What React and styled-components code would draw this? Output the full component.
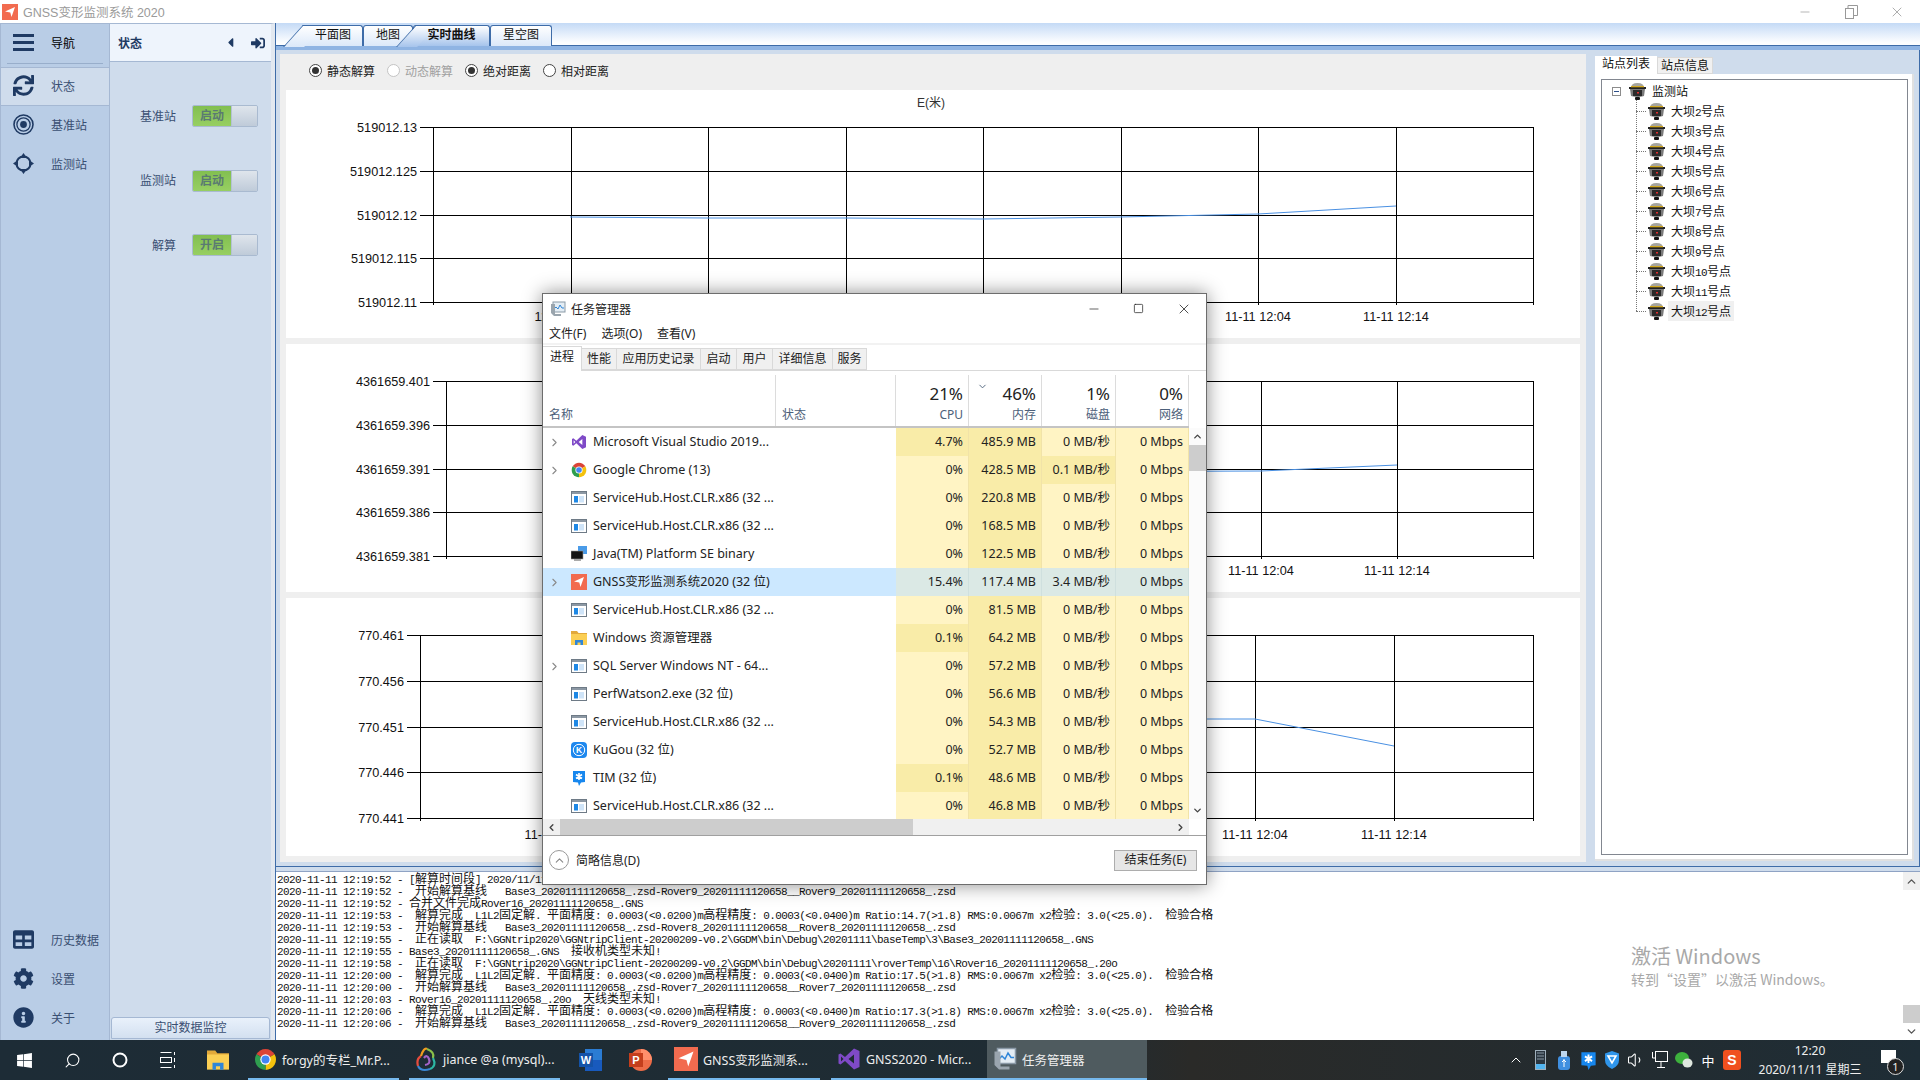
import styled, { createGlobalStyle } from "styled-components"
import { FaSync, FaTable, FaCog, FaInfoCircle, FaSignInAlt, FaCaretLeft, FaWindows } from "react-icons/fa"
import { ChevronRight, ChevronUp, ChevronDown, ChevronLeft, Search, Volume1, Minus, Square, X } from "lucide-react"

const Global = createGlobalStyle`
html,body{margin:0;padding:0;overflow:hidden;background:#fff;}
*{box-sizing:border-box;}
body{font-family:"Liberation Sans","Noto Sans CJK SC",sans-serif;font-size:12px;}
`

const navy = "#1f3a63"
const border = "#a5b8d3"

// icons
const GnssLogo = ({ size = 16 }) => (
  <svg width={size} height={size} viewBox="0 0 16 16"><rect width="16" height="16" fill="#f26b4f" /><path d="M3 7.5 13 3 9.5 13 8.3 8.6Z" fill="#fff" /></svg>
)
const Bars = () => (
  <svg width="21" height="17" viewBox="0 0 21 17"><path d="M0 0h21v3H0zM0 7h21v3H0zM0 14h21v3H0z" fill={navy} /></svg>
)
const Bullseye = () => (
  <svg width="21" height="21" viewBox="0 0 21 21" fill="none" stroke={navy}><circle cx="10.5" cy="10.5" r="9.5" strokeWidth="1.6" /><circle cx="10.5" cy="10.5" r="6.6" strokeWidth="1.3" /><circle cx="10.5" cy="10.5" r="3.4" fill={navy} stroke="none" /></svg>
)
const Crosshair = () => (
  <svg width="21" height="21" viewBox="0 0 21 21" fill={navy}><circle cx="10.5" cy="10.5" r="7" fill="none" stroke={navy} strokeWidth="2" /><path d="M10.5 0 14 5H7zM10.5 21 7 16h7zM0 10.5 5 7v7zM21 10.5 16 14V7z" /></svg>
)
const Restore = () => (
  <svg width="13" height="14" viewBox="0 0 13 14" fill="none" stroke="#999"><rect x=".5" y="3.500" width="8" height="10" /><path d="M3 3.500V.5h9.500v10H8.500" /></svg>
)
const Receiver = () => (
  <svg width="19" height="19" viewBox="0 0 19 19"><path d="M3 6Q3 1 9.500 1T16 6Z" fill="#a5a59f" /><rect x="1" y="5" width="17" height="2" fill="#222" /><rect x="3" y="4" width="13" height="1.300" fill="#d2a820" /><path d="M2 7h15l-1 7q-6 2-13 0Z" fill="#7a7a7a" /><rect x="5" y="8" width="9" height="6" fill="#2a2a2a" /><rect x="9" y="10" width="2" height="1.500" fill="#e03030" /><rect x="7" y="15" width="5" height="3" rx="1" fill="#151515" /></svg>
)
const ServiceIcon = () => (
  <svg width="16" height="16" viewBox="0 0 16 16"><rect x=".5" y="1.500" width="15" height="13" fill="#fff" stroke="#6e7a86" /><rect x="1" y="2" width="14" height="2" fill="#8c98a4" /><rect x="3" y="6" width="4" height="6.500" fill="#1e88e5" /><rect x="8" y="6" width="5" height="6.500" fill="#cfe4f8" /></svg>
)
const VsIcon = ({ size = 16 }) => (
  <svg width={size} height={size} viewBox="0 0 24 24"><path fillRule="evenodd" d="M17 1.500 22.500 4v16L17 22.500 8 14l-4.500 3.500L1.500 16.500v-9L3.500 6.500 8 10ZM17 7.500 11.500 12l5.500 4.500ZM4 9.500v5L6.500 12Z" fill="#7f4ac7" /></svg>
)
const ChromeIcon = ({ size = 16 }) => (
  <svg width={size} height={size} viewBox="0 0 24 24"><path d="M12 12 2.500 6.500A11 11 0 0 1 21.500 6.500Z" fill="#db4437" /><path d="M12 12 21.500 6.500A11 11 0 0 1 12 23Z" fill="#f4c20d" /><path d="M12 12 12 23A11 11 0 0 1 2.500 6.500Z" fill="#2f9e4f" /><circle cx="12" cy="12" r="5.400" fill="#fff" /><circle cx="12" cy="12" r="4.200" fill="#4285f4" /></svg>
)
const JavaIcon = () => (
  <svg width="16" height="16" viewBox="0 0 16 16"><rect x="7" y="0" width="9" height="8" fill="#4a9be8" /><rect x="0" y="5" width="12" height="8" fill="#151515" stroke="#999" strokeWidth=".6" /><rect x="3" y="13" width="7" height="2" fill="#aaa" /></svg>
)
const FolderIcon = ({ size = 16 }) => (
  <svg width={size} height={size} viewBox="0 0 16 16"><path d="M0 1h6l1.500 2H16v3H0Z" fill="#e2a93a" /><rect y="4" width="16" height="11" fill="#fbcf54" /><path d="M4 15v-5h8v5h-2.500v-2.500h-3V15Z" fill="#2f86d8" /></svg>
)
const KugouIcon = () => (
  <svg width="16" height="16" viewBox="0 0 16 16"><rect width="16" height="16" rx="4" fill="#1e88ee" /><circle cx="8" cy="8" r="5.700" fill="none" stroke="#fff" /><text x="8" y="11" fontSize="8.500" fontWeight="700" fontFamily="Liberation Sans" textAnchor="middle" fill="#fff">K</text></svg>
)
const TimIcon = ({ size = 16 }) => (
  <svg width={size} height={size} viewBox="0 0 16 16"><path d="M2 1h12v11l-4 .5L8 16l-1-3.500-5-.5Z" fill="#1787ee" /><path d="M8 3v7M5 4.500l6 4M11 4.500l-6 4" stroke="#fff" strokeWidth="1.600" /></svg>
)
const TmIcon = ({ size = 16 }) => (
  <svg width={size} height={size} viewBox="0 0 16 16"><rect x="3" y="1" width="12" height="10" fill="#e4edf4" stroke="#8a99a6" /><path d="M4 8l2-2 2 2 2-4 2 3h2" fill="none" stroke="#2f86d8" /><path d="M1 3v9l3 3h7v-2H5V3Z" fill="#9aa5ae" /></svg>
)
const NavicatIcon = () => (
  <svg width="23" height="26" viewBox="0 0 23 26" fill="none" strokeWidth="2.200"><path d="M6 10Q1 13 3 20" stroke="#e84c3d" /><path d="M6 10Q9 1 12 3" stroke="#f29c1f" /><path d="M12 3Q20 6 18 12" stroke="#8cc24a" /><path d="M18 12Q22 20 15 23" stroke="#2db6a3" /><path d="M15 23Q6 26 3 20" stroke="#3b87d4" /><path d="M9 12Q12 8 14 13T10 19" stroke="#a463c9" /></svg>
)
const WordIcon = () => (
  <svg width="23" height="24" viewBox="0 0 23 24"><rect x="6" y="1" width="17" height="22" fill="#2b7cd3" /><rect x="6" y="12" width="17" height="11" fill="#185abd" /><rect y="5" width="14" height="14" fill="#1453a8" /><text x="7" y="16" fontSize="11" fontWeight="700" fontFamily="Liberation Sans" textAnchor="middle" fill="#fff">W</text></svg>
)
const PptIcon = () => (
  <svg width="23" height="24" viewBox="0 0 23 24"><circle cx="12" cy="12" r="11" fill="#ed6c47" /><path d="M12 1a11 11 0 0 1 11 11H12Z" fill="#ff8f6b" /><rect y="5" width="14" height="14" fill="#c43e1c" /><text x="7" y="16" fontSize="11" fontWeight="700" fontFamily="Liberation Sans" textAnchor="middle" fill="#fff">P</text></svg>
)
const TaskView = () => (
  <svg width="16" height="18" viewBox="0 0 16 18" fill="none" stroke="#fff"><rect x=".5" y="6.500" width="11" height="5" /><path d="M.5 1.500h11M.5 16.500h11M14.500 1v3M14.500 7v4M14.500 14v3" /></svg>
)
const TrayBar = () => (
  <svg width="11" height="20" viewBox="0 0 11 20"><rect x=".5" y=".5" width="10" height="19" fill="#2a3640" stroke="#9fb0bc" /><rect x="1" y="14" width="9" height="5" fill="#52b5f0" /><path d="M2 3h7M2 6h7M2 9h7" stroke="#8797a3" /></svg>
)
const TrayUsb = () => (
  <svg width="14" height="20" viewBox="0 0 14 20"><rect x="1" y="6" width="12" height="14" rx="3" fill="#3f8fe0" /><rect x="4" y="1" width="6" height="6" fill="#bcd6ee" /><path d="M7 9v8M5 12l2-2 2 2" stroke="#fff" fill="none" /></svg>
)
const TrayShield = () => (
  <svg width="16" height="20" viewBox="0 0 16 20"><path d="M8 1 15 3.500V10q0 6-7 9-7-3-7-9V3.500Z" fill="#2f95ea" /><path d="M4 6h8L8 13Z" fill="none" stroke="#fff" strokeWidth="1.600" /></svg>
)
const TrayNet = () => (
  <svg width="16" height="20" viewBox="0 0 16 20" fill="none" stroke="#fff"><rect x="3.500" y="1.500" width="12" height="10" /><path d="M9 12v5M5 17.500h8M.5 2v6h3" /></svg>
)
const TrayWechat = () => (
  <svg width="18" height="18" viewBox="0 0 18 18"><ellipse cx="7" cy="7" rx="7" ry="6" fill="#3db13d" /><ellipse cx="12.500" cy="12" rx="5" ry="4.500" fill="#dfe7df" /></svg>
)
const TraySogou = () => (
  <svg width="18" height="20" viewBox="0 0 18 20"><rect width="18" height="20" rx="3" fill="#f0501e" /><text x="9" y="15" fontSize="14" fontWeight="700" fontFamily="Liberation Sans" textAnchor="middle" fill="#fff">S</text></svg>
)

// splits han text from latin so each gets its own metric
const Han = styled.span`
font-family:"Noto Sans CJK SC",sans-serif;
font-size:12px;
letter-spacing:0;
`
const Mixed = ({ text }) => text.split(/([\u4e00-\u9fff]+)/).map((part, i) =>
  /[\u4e00-\u9fff]/.test(part) ? <Han key={i}>{part}</Han> : part
)

// top title bar
const TitleBar = styled.div`
height:23px;
display:flex;
align-items:center;
padding-left:2px;
background:#fff;
`
const AppTitle = styled.div`
margin-left:5px;
color:#9a9a9a;
font-size:12.5px;
flex:1;
`
const WinBtn = styled.div`
width:46px;
display:flex;
justify-content:center;
color:#999;
`

const Main = styled.div`
height:1017px;
display:flex;
`

// left nav
const Nav = styled.div`
width:110px;
background:#b9cde6;
border-left:1px solid ${border};
border-right:1px solid ${border};
border-top:1px solid ${border};
display:flex;
flex-direction:column;
`
const NavHead = styled.div`
height:44px;
position:relative;
display:flex;
align-items:center;
padding-bottom:7px;
border-bottom:1px solid ${border};
&::after{
  content:"";
  position:absolute;
  left:6px;
  right:6px;
  bottom:3px;
  border-top:1px solid #98aecb;
}
`
const NavRow = styled.div`
height:${p => p.$h || 39}px;
display:flex;
align-items:center;
padding-bottom:2px;
color:#3a4f72;
background:${p => p.$active ? "#cfdcec" : "transparent"};
border-bottom:${p => p.$active ? `1px solid ${border}` : "none"};
`
const NavIcon = styled.div`
width:50px;
display:flex;
justify-content:center;
color:${navy};
font-size:21px;
line-height:0;
padding-right:5px;
`
const NavLabel = styled.span`
font-size:12px;
`
const NavBottom = styled.div`
margin-top:auto;
margin-bottom:2px;
`

// state panel
const StatePanel = styled.div`
width:165px;
background:#cfdcec;
border-right:4px solid #e2e8f0;
border-top:1px solid ${border};
display:flex;
flex-direction:column;
`
const StateHead = styled.div`
height:38px;
background:#eef4fc;
border-bottom:1px solid ${border};
display:flex;
align-items:center;
padding-left:8px;
color:${navy};
font-weight:700;
font-size:12px;
`
const StateTitle = styled.span`
flex:1;
`
const HeadIcon = styled.span`
display:flex;
color:${navy};
font-size:${p => p.$size}px;
margin-right:${p => p.$mr}px;
`
const SwitchList = styled.div`
display:flex;
flex-direction:column;
gap:42.500px;
padding-top:43px;
`
const SwitchRow = styled.div`
display:flex;
align-items:center;
height:22px;
`
const SwitchLabel = styled.div`
width:66px;
text-align:right;
margin-right:16px;
margin-top:-2px;
color:#3a4f72;
`
const Switch = styled.div`
width:66px;
height:22px;
display:flex;
border:1px solid #a9bad0;
border-radius:2px;
overflow:hidden;
`
const SwitchOn = styled.div`
width:38px;
background:linear-gradient(#82bf50,#97cf62);
color:#5a7a72;
font-weight:700;
text-align:center;
line-height:20px;
`
const SwitchKnob = styled.div`
flex:1;
background:linear-gradient(#dfe5ec,#bfcbd9);
border-left:1px solid #b4c2d4;
`
const MonitorBtn = styled.div`
margin:auto 1px 1px;
height:22px;
background:linear-gradient(#e9f1fb,#d3e0f0);
border:1px solid ${border};
border-radius:3px 3px 0 0;
text-align:center;
line-height:20px;
color:#3a4f72;
`

// workspace
const Workspace = styled.div`
flex:1;
min-width:0;
display:flex;
flex-direction:column;
border-left:1px solid #3e6ca8;
background:#cfdcec;
`
const TabBar = styled.div`
height:27px;
flex:none;
background:linear-gradient(#c4daf6,#fdfeff 85%);
border-bottom:4px solid #8fb4e3;
box-shadow:inset 0 -1px 0 #3e6ca8;
display:flex;
padding:2px 0 0 27px;
position:relative;
`
const Tab = styled.div`
width:${p => p.$w}px;
height:21px;
position:relative;
text-align:center;
line-height:19px;
font-size:12px;
font-weight:${p => p.$active ? 700 : 400};
color:#111;
z-index:${p => p.$active ? 2 : 1};
background:${p => p.$active ? "linear-gradient(#fff,#a6c4ec)" : "linear-gradient(#fff,#dbe8f9)"};
border:1px solid #3e6ca8;
border-bottom:none;
border-radius:3px 3px 0 0;
&::before{
  content:${p => p.$slant ? '""' : "none"};
  position:absolute;
  left:${p => p.$slant}px;
  top:-1px;
  width:20px;
  height:21px;
  background:${p => p.$active ? "linear-gradient(#fff,#a6c4ec)" : "linear-gradient(#fff,#dbe8f9)"};
  border-left:1px solid #3e6ca8;
  border-top:1px solid #3e6ca8;
  transform:skewX(-42deg);
  z-index:-1;
}
`
const Content = styled.div`
height:817px;
flex:none;
display:flex;
padding:4px 0;
background:#cfdcec;
border-bottom:1px solid #3e6ca8;
border-right:1px solid #3e6ca8;
`
const ChartPanel = styled.div`
width:1306px;
margin-left:4px;
background:#efefef;
padding-left:6px;
`
const RadioRow = styled.div`
height:36px;
display:flex;
align-items:center;
gap:12px;
padding:0 0 3px 23px;
`
const RadioItem = styled.div`
display:flex;
align-items:center;
gap:5px;
color:${p => p.$disabled ? "#a0a0a0" : "#222"};
`
const RadioDot = styled.span`
width:13px;
height:13px;
border-radius:50%;
background:#fff;
border:1px solid ${p => p.$disabled ? "#c4c4c4" : "#444"};
display:flex;
align-items:center;
justify-content:center;
&::after{
  content:${p => p.$on ? '""' : "none"};
  width:7px;
  height:7px;
  border-radius:50%;
  background:#333;
}
`
const ChartCard = styled.div`
width:1294px;
height:${p => p.$h}px;
background:#fff;
margin-bottom:6px;
line-height:0;
`

const Chart = ({ top, h, left, ys, labels, points, times, title, timeOffset = 19 }) => {
  const right = 1533
  const bottom = ys[ys.length - 1]
  const xs = Array.from({ length: 9 }, (_, i) => Math.round(left + (right - left) * i / 8))
  return (
    <ChartCard $h={h}>
      <svg width="1294" height={h} viewBox={`286 ${top} 1294 ${h}`}>
        {title && <text x="931" y="107" fontSize="12" fontFamily="Liberation Sans, Noto Sans CJK SC" textAnchor="middle" fill="#333">{title}</text>}
        <g stroke="#000" shapeRendering="crispEdges">
          {ys.map(y => <line key={y} x1={left - 13} x2={right} y1={y + .5} y2={y + .5} />)}
          {xs.map(x => <line key={x} x1={x + .5} x2={x + .5} y1={ys[0]} y2={bottom + 3} />)}
        </g>
        {labels.map((t, i) => (
          <text key={t} x={left - 16} y={ys[i] + 4.500} fontSize="12.700" fontFamily="Liberation Sans" textAnchor="end" fill="#111">{t}</text>
        ))}
        {times.map(([x, t]) => (
          <text key={t} x={x} y={bottom + timeOffset} fontSize="12.700" fontFamily="Liberation Sans" textAnchor="middle" fill="#111">{t}</text>
        ))}
        <polyline points={points} fill="none" stroke="#4a90e2" strokeWidth="1" />
      </svg>
    </ChartCard>
  )
}

// right station list
const SitePanel = styled.div`
flex:1;
padding:2px 0 0 9px;
display:flex;
flex-direction:column;
`
const SiteTabs = styled.div`
display:flex;
height:18px;
align-items:flex-end;
`
const SiteTab = styled.div`
height:${p => p.$active ? 18 : 17}px;
width:${p => p.$active ? 62 : 56}px;
background:${p => p.$active ? "#fff" : "#f0f0f0"};
border:${p => p.$active ? "none" : "1px solid #d9d9d9"};
text-align:center;
line-height:16px;
color:#111;
`
const SiteBody = styled.div`
width:319px;
height:787px;
background:#fff;
border-right:2px solid #e0e0e0;
border-bottom:2px solid #e0e0e0;
padding:5px 4px 4px 6px;
`
const Tree = styled.div`
height:100%;
border:1px solid #828790;
padding-top:1px;
`
const TreeRoot = styled.div`
height:20px;
display:flex;
align-items:center;
padding-left:10px;
position:relative;
`
const Expander = styled.span`
width:9px;
height:9px;
border:1px solid #8c8c8c;
display:flex;
align-items:center;
justify-content:center;
margin-right:7px;
&::after{content:"";width:5px;height:1px;background:#2d4f8a;}
`
const TreeRow = styled.div`
height:20px;
display:flex;
align-items:center;
padding-left:45px;
position:relative;
&::before{
  content:"";
  position:absolute;
  left:34px;
  width:10px;
  top:50%;
  border-top:1px dotted #777;
}
&::after{
  content:"";
  position:absolute;
  left:34px;
  top:-1px;
  height:${p => p.$last ? 11 : 21}px;
  border-left:1px dotted #777;
}
`
const TreeLabel = styled.span`
height:20px;
line-height:20px;
padding:0 3px 0 3px;
margin-left:2px;
background:${p => p.$selected ? "#f0f0f0" : "transparent"};
font-family:"Liberation Mono",monospace;
font-size:11px;
letter-spacing:-.6px;
color:#111;
`

// log area
const LogPane = styled.div`
height:169px;
flex:none;
margin-top:4px;
background:#fff;
border-top:1px solid #8fa3c4;
padding-left:1px;
position:relative;
display:flex;
`
const LogText = styled.div`
flex:1;
font-family:"Liberation Mono",monospace;
font-size:11px;
letter-spacing:-.6px;
line-height:12px;
color:#111;
white-space:pre;
`
const LogLine = styled.div`
height:12px;
`
const LogScroll = styled.div`
width:17px;
display:flex;
flex-direction:column;
align-items:center;
justify-content:space-between;
color:#555;
background:#fff;
position:relative;
`
const LogArrow = styled.div`
width:17px;
height:18px;
display:flex;
align-items:center;
justify-content:center;
background:${p => p.$bg || "#fff"};
`
const LogThumb = styled.div`
position:absolute;
top:133px;
width:17px;
height:18px;
background:#cdcdcd;
`
const Watermark = styled.div`
position:absolute;
left:1355px;
top:71px;
pointer-events:none;
`
const WmTitle = styled.div`
font-size:20px;
line-height:26px;
font-family:"Noto Sans CJK SC",sans-serif;
color:#a8a8a8;
`
const WmSub = styled.div`
font-size:14px;
line-height:22px;
margin-top:-1px;
font-family:"Noto Sans CJK SC",sans-serif;
color:#a8a8a8;
`

// task manager window
const TaskWindow = styled.div`
position:absolute;
left:542px;
top:293px;
width:665px;
height:592px;
background:#fff;
border:1px solid #6d6d6d;
box-shadow:0 0 18px rgba(0,0,0,.45);
font-family:"Noto Sans","Noto Sans CJK SC",sans-serif;
display:flex;
flex-direction:column;
color:#222;
z-index:5;
`
const TmTitle = styled.div`
height:29px;
display:flex;
align-items:center;
padding-left:7px;
flex:none;
`
const TmTitleText = styled.span`
flex:1;
font-size:12px;
margin-left:5px;
`
const TmBtn = styled.span`
width:45px;
display:flex;
justify-content:center;
color:#222;
`
const TmMenu = styled.div`
height:18px;
margin-top:1px;
flex:none;
display:flex;
gap:15px;
padding-left:6px;
align-items:center;
font-size:12px;
`
const TmTabs = styled.div`
height:28px;
flex:none;
margin-top:1px;
border-top:2px solid #f2f2f2;
border-bottom:1px solid #d9d9d9;
display:flex;
align-items:flex-end;
`
const TmTab = styled.div`
width:${p => p.$w}px;
height:${p => p.$active ? 25 : 22}px;
background:${p => p.$active ? "#fff" : "#f0f0f0"};
border:1px solid #d9d9d9;
border-left:${p => p.$active ? "0" : "none"};
border-bottom:${p => p.$active ? "none" : "1px solid #d9d9d9"};
text-align:center;
font-size:12px;
line-height:20px;
margin-bottom:${p => p.$active ? -1 : 0}px;
position:relative;
`
const Columns = `233px 120px 73px 73px 74px 73px`
const TableHead = styled.div`
height:57px;
flex:none;
display:grid;
grid-template-columns:${Columns};
width:646px;
border-bottom:2px solid #c4c4c4;
`
const HeadCell = styled.div`
display:flex;
flex-direction:column;
justify-content:flex-end;
align-items:${p => p.$right ? "flex-end" : "flex-start"};
padding:0 5px 1px 6px;
border-right:1px solid #dcdcdc;
margin-top:4px;
position:relative;
`
const HeadPct = styled.div`
font-size:17px;
line-height:23px;
color:#222;
`
const HeadLabel = styled.div`
font-size:12px;
line-height:20px;
color:#4c607a;
`
const SortMark = styled.span`
position:absolute;
left:8px;
top:6px;
color:#4c607a;
display:flex;
`
const TableBody = styled.div`
height:391px;
flex:none;
display:flex;
overflow:hidden;
`
const Rows = styled.div`
width:646px;
display:flex;
flex-direction:column;
`
const Row = styled.div`
height:28px;
flex:none;
display:grid;
grid-template-columns:${Columns};
align-items:stretch;
font-size:12.500px;
line-height:18px;
background:${p => p.$selected ? "#cce8ff" : "transparent"};
`
const NameCell = styled.div`
display:flex;
align-items:center;
white-space:nowrap;
overflow:hidden;
`
const Chevron = styled.span`
width:28px;
padding-left:5px;
display:flex;
color:#8a8a8a;
flex:none;
`
const RowIcon = styled.span`
width:22px;
flex:none;
display:flex;
`
const HeatCell = styled.div`
display:flex;
align-items:center;
justify-content:flex-end;
padding-right:5px;
white-space:nowrap;
border-right:1px solid ${p => p.$selected ? "#cfe0de" : "#f1e3a8"};
background:${p => p.$selected ? "#dbe9e5" : p.$hot ? "#f9eca8" : "#fff4c4"};
`
const VScroll = styled.div`
width:17px;
position:relative;
display:flex;
flex-direction:column;
align-items:center;
justify-content:space-between;
padding:3px 0;
color:#444;
background:#fbfbfb;
`
const VThumb = styled.div`
position:absolute;
top:17px;
left:0;
width:17px;
height:26px;
background:#cdcdcd;
`
const HScroll = styled.div`
height:16px;
flex:none;
width:646px;
background:#f0f0f0;
display:flex;
align-items:center;
justify-content:space-between;
padding:0 3px;
color:#444;
position:relative;
`
const HThumb = styled.div`
position:absolute;
left:17px;
top:0;
width:353px;
height:16px;
background:#cdcdcd;
`
const TmFooter = styled.div`
flex:1;
border-top:1px solid #a0a0a0;
display:flex;
align-items:center;
padding:0 9px 0 6px;
font-size:12px;
gap:7px;
`
const FoldCircle = styled.span`
width:20px;
height:20px;
border:1px solid #999;
border-radius:50%;
display:flex;
align-items:center;
justify-content:center;
color:#888;
`
const FoldText = styled.span`
flex:1;
`
const EndBtn = styled.div`
width:83px;
height:21px;
background:#e6e6e6;
border:1px solid #adadad;
text-align:center;
line-height:18px;
font-size:12px;
`

// taskbar
const Taskbar = styled.div`
height:40px;
background:linear-gradient(90deg,#1d2c36,#1f2c33 55%,#2a2a28 62%,#1e2d36);
display:flex;
color:#eee;
font-family:"Noto Sans","Noto Sans CJK SC",sans-serif;
font-size:12.500px;
`
const Slot = styled.div`
width:${p => p.$w}px;
margin-left:${p => p.$ml || 0}px;
display:flex;
align-items:center;
justify-content:center;
color:#fff;
flex:none;
`
const Mirrored = styled.span`
display:flex;
transform:scaleX(-1);
`
const TaskBtn = styled.div`
width:${p => p.$w}px;
margin-left:${p => p.$ml || 0}px;
flex:none;
display:flex;
align-items:center;
gap:5px;
padding:0 0 0 6px;
white-space:nowrap;
border-bottom:2px solid #76b9ed;
background:${p => p.$active ? "#4f5b5f" : "transparent"};
`
const TrayItem = styled.div`
width:24px;
display:flex;
align-items:center;
justify-content:center;
color:#fff;
font-size:13px;
`
const Tray = styled.div`
margin-left:auto;
display:flex;
`
const Clock = styled.div`
width:104px;
margin-left:14px;
display:flex;
flex-direction:column;
align-items:center;
justify-content:center;
line-height:19px;
font-size:12px;
white-space:nowrap;
`
const Notify = styled.div`
width:58px;
position:relative;
`
const NotifyGlyph = styled.div`
position:absolute;
left:19px;
top:10px;
width:15px;
height:13px;
background:#fff;
`
const NotifyCount = styled.div`
position:absolute;
left:25px;
top:18px;
width:17px;
height:17px;
border:1px solid #ddd;
border-radius:50%;
background:#222;
font-size:11px;
line-height:15px;
text-align:center;
`

const Root = styled.div`
width:1920px;
height:1080px;
position:relative;
overflow:hidden;
background:#fff;
`

const navTop = [
  ["状态", <FaSync />, true, 38],
  ["基准站", <Bullseye />, false, 39],
  ["监测站", <Crosshair />, false, 39],
]
const navBottom = [
  ["历史数据", <FaTable />],
  ["设置", <FaCog />],
  ["关于", <FaInfoCircle />],
]
const switches = [["基准站", "启动"], ["监测站", "启动"], ["解算", "开启"]]
const radios = [
  ["静态解算", true, false],
  ["动态解算", false, true],
  ["绝对距离", true, false],
  ["相对距离", false, false],
]
const procs = [
  ["Microsoft Visual Studio 2019...", <VsIcon />, true, "4.7%", "485.9 MB", "0 MB/秒", "cpu"],
  ["Google Chrome (13)", <ChromeIcon />, true, "0%", "428.5 MB", "0.1 MB/秒", "disk"],
  ["ServiceHub.Host.CLR.x86 (32 ...", <ServiceIcon />, false, "0%", "220.8 MB", "0 MB/秒"],
  ["ServiceHub.Host.CLR.x86 (32 ...", <ServiceIcon />, false, "0%", "168.5 MB", "0 MB/秒"],
  ["Java(TM) Platform SE binary", <JavaIcon />, false, "0%", "122.5 MB", "0 MB/秒"],
  ["GNSS变形监测系统2020 (32 位)", <GnssLogo />, true, "15.4%", "117.4 MB", "3.4 MB/秒", "sel"],
  ["ServiceHub.Host.CLR.x86 (32 ...", <ServiceIcon />, false, "0%", "81.5 MB", "0 MB/秒"],
  ["Windows 资源管理器", <FolderIcon />, false, "0.1%", "64.2 MB", "0 MB/秒", "cpu"],
  ["SQL Server Windows NT - 64...", <ServiceIcon />, true, "0%", "57.2 MB", "0 MB/秒"],
  ["PerfWatson2.exe (32 位)", <ServiceIcon />, false, "0%", "56.6 MB", "0 MB/秒"],
  ["ServiceHub.Host.CLR.x86 (32 ...", <ServiceIcon />, false, "0%", "54.3 MB", "0 MB/秒"],
  ["KuGou (32 位)", <KugouIcon />, false, "0%", "52.7 MB", "0 MB/秒"],
  ["TIM (32 位)", <TimIcon />, false, "0.1%", "48.6 MB", "0 MB/秒", "cpu"],
  ["ServiceHub.Host.CLR.x86 (32 ...", <ServiceIcon />, false, "0%", "46.8 MB", "0 MB/秒"],
]
const base = "Base3_20201111120658_.zsd"
const solve = r => `-  解算完成  L1L2固定解. 平面精度: 0.0003(<0.0200)m高程精度: 0.0003(<0.0400)m Ratio:${r}(>1.8) RMS:0.0067m x2检验: 3.0(<25.0).  检验合格`
const start = n => `-  开始解算基线   ${base}-Rover${n}_20201111120658__Rover${n}_20201111120658_.zsd`
const logs = [
  "2020-11-11 12:19:52 - [解算时间段] 2020/11/11 11:20:00",
  `2020-11-11 12:19:52 ${start(9)}`,
  "2020-11-11 12:19:52 - 合并文件完成Rover16_20201111120658_.GNS",
  `2020-11-11 12:19:53 ${solve("14.7")}`,
  `2020-11-11 12:19:53 ${start(8)}`,
  "2020-11-11 12:19:55 -  正在读取  F:\\GGNtrip2020\\GGNtripClient-20200209-v0.2\\GGDM\\bin\\Debug\\20201111\\baseTemp\\3\\Base3_20201111120658_.GNS",
  "2020-11-11 12:19:55 - Base3_20201111120658_.GNS  接收机类型未知!",
  "2020-11-11 12:19:58 -  正在读取  F:\\GGNtrip2020\\GGNtripClient-20200209-v0.2\\GGDM\\bin\\Debug\\20201111\\roverTemp\\16\\Rover16_20201111120658_.20o",
  `2020-11-11 12:20:00 ${solve("17.5")}`,
  `2020-11-11 12:20:00 ${start(7)}`,
  "2020-11-11 12:20:03 - Rover16_20201111120658_.20o  天线类型未知!",
  `2020-11-11 12:20:06 ${solve("17.3")}`,
  `2020-11-11 12:20:06 ${start(9)}`,
]
const sites = [2, 3, 4, 5, 6, 7, 8, 9, 10, 11, 12]

const App = () => {
  return (
    <Root>
      <Global />
      <TitleBar>
        <GnssLogo />
        <AppTitle>GNSS变形监测系统 2020</AppTitle>
        <WinBtn><Minus size={14} strokeWidth={1.2} /></WinBtn>
        <WinBtn><Restore /></WinBtn>
        <WinBtn><X size={16} strokeWidth={1.2} /></WinBtn>
      </TitleBar>

      <Main>
        <Nav>
          <NavHead>
            <NavIcon><Bars /></NavIcon>
            <NavLabel>导航</NavLabel>
          </NavHead>
          {navTop.map(([label, icon, active, h]) => (
            <NavRow key={label} $active={active} $h={h}>
              <NavIcon>{icon}</NavIcon>
              <NavLabel>{label}</NavLabel>
            </NavRow>
          ))}
          <NavBottom>
            {navBottom.map(([label, icon]) => (
              <NavRow key={label}>
                <NavIcon>{icon}</NavIcon>
                <NavLabel>{label}</NavLabel>
              </NavRow>
            ))}
          </NavBottom>
        </Nav>

        <StatePanel>
          <StateHead>
            <StateTitle>状态</StateTitle>
            <HeadIcon $size={15} $mr={13}><FaCaretLeft /></HeadIcon>
            <HeadIcon $size={14} $mr={6}><FaSignInAlt /></HeadIcon>
          </StateHead>
          <SwitchList>
            {switches.map(([label, state]) => (
              <SwitchRow key={label}>
                <SwitchLabel>{label}</SwitchLabel>
                <Switch>
                  <SwitchOn>{state}</SwitchOn>
                  <SwitchKnob />
                </Switch>
              </SwitchRow>
            ))}
          </SwitchList>
          <MonitorBtn>实时数据监控</MonitorBtn>
        </StatePanel>

        <Workspace>
          <TabBar>
            <Tab $w={60} $slant={-11}>平面图</Tab>
            <Tab $w={50}>地图</Tab>
            <Tab $w={77} $active $slant={-8}>实时曲线</Tab>
            <Tab $w={62}>星空图</Tab>
          </TabBar>
          <Content>
            <ChartPanel>
              <RadioRow>
                {radios.map(([label, on, disabled]) => (
                  <RadioItem key={label} $disabled={disabled}>
                    <RadioDot $on={on} $disabled={disabled} />
                    {label}
                  </RadioItem>
                ))}
              </RadioRow>
              <Chart
                top={90} h={248} left={433} title="E(米)"
                ys={[127, 171, 215, 258, 302]}
                labels={["519012.13", "519012.125", "519012.12", "519012.115", "519012.11"]}
                times={[[567, "11-11 11:14"], [1258, "11-11 12:04"], [1396, "11-11 12:14"]]}
                points="570,217 707,218 845,218 983,219 1120,217 1258,214 1396,206"
              />
              <Chart
                top={344} h={248} left={446}
                ys={[381, 425, 469, 512, 556]}
                labels={["4361659.401", "4361659.396", "4361659.391", "4361659.386", "4361659.381"]}
                times={[[1261, "11-11 12:04"], [1397, "11-11 12:14"]]}
                points="990,472 1261,471 1397,465"
              />
              <Chart
                top={598} h={258} left={420} timeOffset={21}
                ys={[635, 681, 727, 772, 818]}
                labels={["770.461", "770.456", "770.451", "770.446", "770.441"]}
                times={[[557, "11-11 11:14"], [1255, "11-11 12:04"], [1394, "11-11 12:14"]]}
                points="1100,719 1255,719 1394,746"
              />
            </ChartPanel>
            <SitePanel>
              <SiteTabs>
                <SiteTab $active>站点列表</SiteTab>
                <SiteTab>站点信息</SiteTab>
              </SiteTabs>
              <SiteBody>
                <Tree>
                  <TreeRoot>
                    <Expander />
                    <Receiver />
                    <TreeLabel><Mixed text="监测站" /></TreeLabel>
                  </TreeRoot>
                  {sites.map((n, i) => (
                    <TreeRow key={n} $last={i === sites.length - 1}>
                      <Receiver />
                      <TreeLabel $selected={n === 12}><Mixed text={`大坝${n}号点`} /></TreeLabel>
                    </TreeRow>
                  ))}
                </Tree>
              </SiteBody>
            </SitePanel>
          </Content>
          <LogPane>
            <LogText>
              {logs.map((line, i) => <LogLine key={i}><Mixed text={line} /></LogLine>)}
            </LogText>
            <LogScroll>
              <LogArrow $bg="#f0f0f0"><ChevronUp size={13} strokeWidth={2.5} /></LogArrow>
              <LogThumb />
              <LogArrow><ChevronDown size={13} strokeWidth={2.5} /></LogArrow>
            </LogScroll>
            <Watermark>
              <WmTitle>激活 Windows</WmTitle>
              <WmSub>转到“设置”以激活 Windows。</WmSub>
            </Watermark>
          </LogPane>
        </Workspace>
      </Main>

      <Taskbar>
        <Slot $w={48}><FaWindows size={17} /></Slot>
        <Slot $w={48}><Mirrored><Search size={17} strokeWidth={1.5} /></Mirrored></Slot>
        <Slot $w={48}>
          <svg width="16" height="16" viewBox="0 0 16 16"><circle cx="8" cy="8" r="6.500" fill="none" stroke="#fff" strokeWidth="2" /></svg>
        </Slot>
        <Slot $w={48}><TaskView /></Slot>
        <Slot $w={52}><FolderIcon size={22} /></Slot>
        <TaskBtn $w={151} $ml={4}><ChromeIcon size={23} />forgy的专栏_Mr.P...</TaskBtn>
        <TaskBtn $w={151} $ml={10}><NavicatIcon />jiance @a (mysql)...</TaskBtn>
        <Slot $w={50} $ml={5}><WordIcon /></Slot>
        <Slot $w={50}><PptIcon /></Slot>
        <TaskBtn $w={152} $ml={3}><GnssLogo size={24} />GNSS变形监测系...</TaskBtn>
        <TaskBtn $w={156} $ml={11}><VsIcon size={24} />GNSS2020 - Micr...</TaskBtn>
        <TaskBtn $w={160} $active><TmIcon size={24} />任务管理器</TaskBtn>
        <Tray>
          <TrayItem><ChevronUp size={16} strokeWidth={1.5} /></TrayItem>
          <TrayItem><TrayBar /></TrayItem>
          <TrayItem><TrayUsb /></TrayItem>
          <TrayItem><TimIcon size={19} /></TrayItem>
          <TrayItem><TrayShield /></TrayItem>
          <TrayItem><Volume1 size={18} strokeWidth={1.4} /></TrayItem>
          <TrayItem><TrayNet /></TrayItem>
          <TrayItem><TrayWechat /></TrayItem>
          <TrayItem>中</TrayItem>
          <TrayItem><TraySogou /></TrayItem>
          <Clock>
            <div>12:20</div>
            <div>2020/11/11 星期三</div>
          </Clock>
          <Notify>
            <NotifyGlyph />
            <NotifyCount>1</NotifyCount>
          </Notify>
        </Tray>
      </Taskbar>

      <TaskWindow>
        <TmTitle>
          <TmIcon />
          <TmTitleText>任务管理器</TmTitleText>
          <TmBtn><Minus size={14} strokeWidth={1.2} /></TmBtn>
          <TmBtn><Square size={11} strokeWidth={1.6} /></TmBtn>
          <TmBtn><X size={16} strokeWidth={1.2} /></TmBtn>
        </TmTitle>
        <TmMenu>
          <span>文件(F)</span>
          <span>选项(O)</span>
          <span>查看(V)</span>
        </TmMenu>
        <TmTabs>
          <TmTab $w={39} $active>进程</TmTab>
          <TmTab $w={35}>性能</TmTab>
          <TmTab $w={84}>应用历史记录</TmTab>
          <TmTab $w={36}>启动</TmTab>
          <TmTab $w={36}>用户</TmTab>
          <TmTab $w={60}>详细信息</TmTab>
          <TmTab $w={34}>服务</TmTab>
        </TmTabs>
        <TableHead>
          <HeadCell><HeadLabel>名称</HeadLabel></HeadCell>
          <HeadCell><HeadLabel>状态</HeadLabel></HeadCell>
          <HeadCell $right><HeadPct>21%</HeadPct><HeadLabel>CPU</HeadLabel></HeadCell>
          <HeadCell $right>
            <SortMark><ChevronDown size={11} /></SortMark>
            <HeadPct>46%</HeadPct><HeadLabel>内存</HeadLabel>
          </HeadCell>
          <HeadCell $right><HeadPct>1%</HeadPct><HeadLabel>磁盘</HeadLabel></HeadCell>
          <HeadCell $right><HeadPct>0%</HeadPct><HeadLabel>网络</HeadLabel></HeadCell>
        </TableHead>
        <TableBody>
          <Rows>
            {procs.map(([name, icon, more, cpu, mem, disk, mark], i) => {
              const sel = mark === "sel"
              return (
                <Row key={i} $selected={sel}>
                  <NameCell>
                    <Chevron>{more && <ChevronRight size={13} />}</Chevron>
                    <RowIcon>{icon}</RowIcon>
                    {name}
                  </NameCell>
                  <div />
                  <HeatCell $selected={sel} $hot={mark === "cpu"}>{cpu}</HeatCell>
                  <HeatCell $selected={sel} $hot>{mem}</HeatCell>
                  <HeatCell $selected={sel} $hot={mark === "disk"}>{disk}</HeatCell>
                  <HeatCell $selected={sel}>0 Mbps</HeatCell>
                </Row>
              )
            })}
          </Rows>
          <VScroll>
            <ChevronUp size={11} strokeWidth={3} />
            <VThumb />
            <ChevronDown size={11} strokeWidth={3} />
          </VScroll>
        </TableBody>
        <HScroll>
          <ChevronLeft size={11} strokeWidth={3} />
          <HThumb />
          <ChevronRight size={11} strokeWidth={3} />
        </HScroll>
        <TmFooter>
          <FoldCircle><ChevronUp size={13} /></FoldCircle>
          <FoldText>简略信息(D)</FoldText>
          <EndBtn>结束任务(E)</EndBtn>
        </TmFooter>
      </TaskWindow>
    </Root>
  )
}

export default App
